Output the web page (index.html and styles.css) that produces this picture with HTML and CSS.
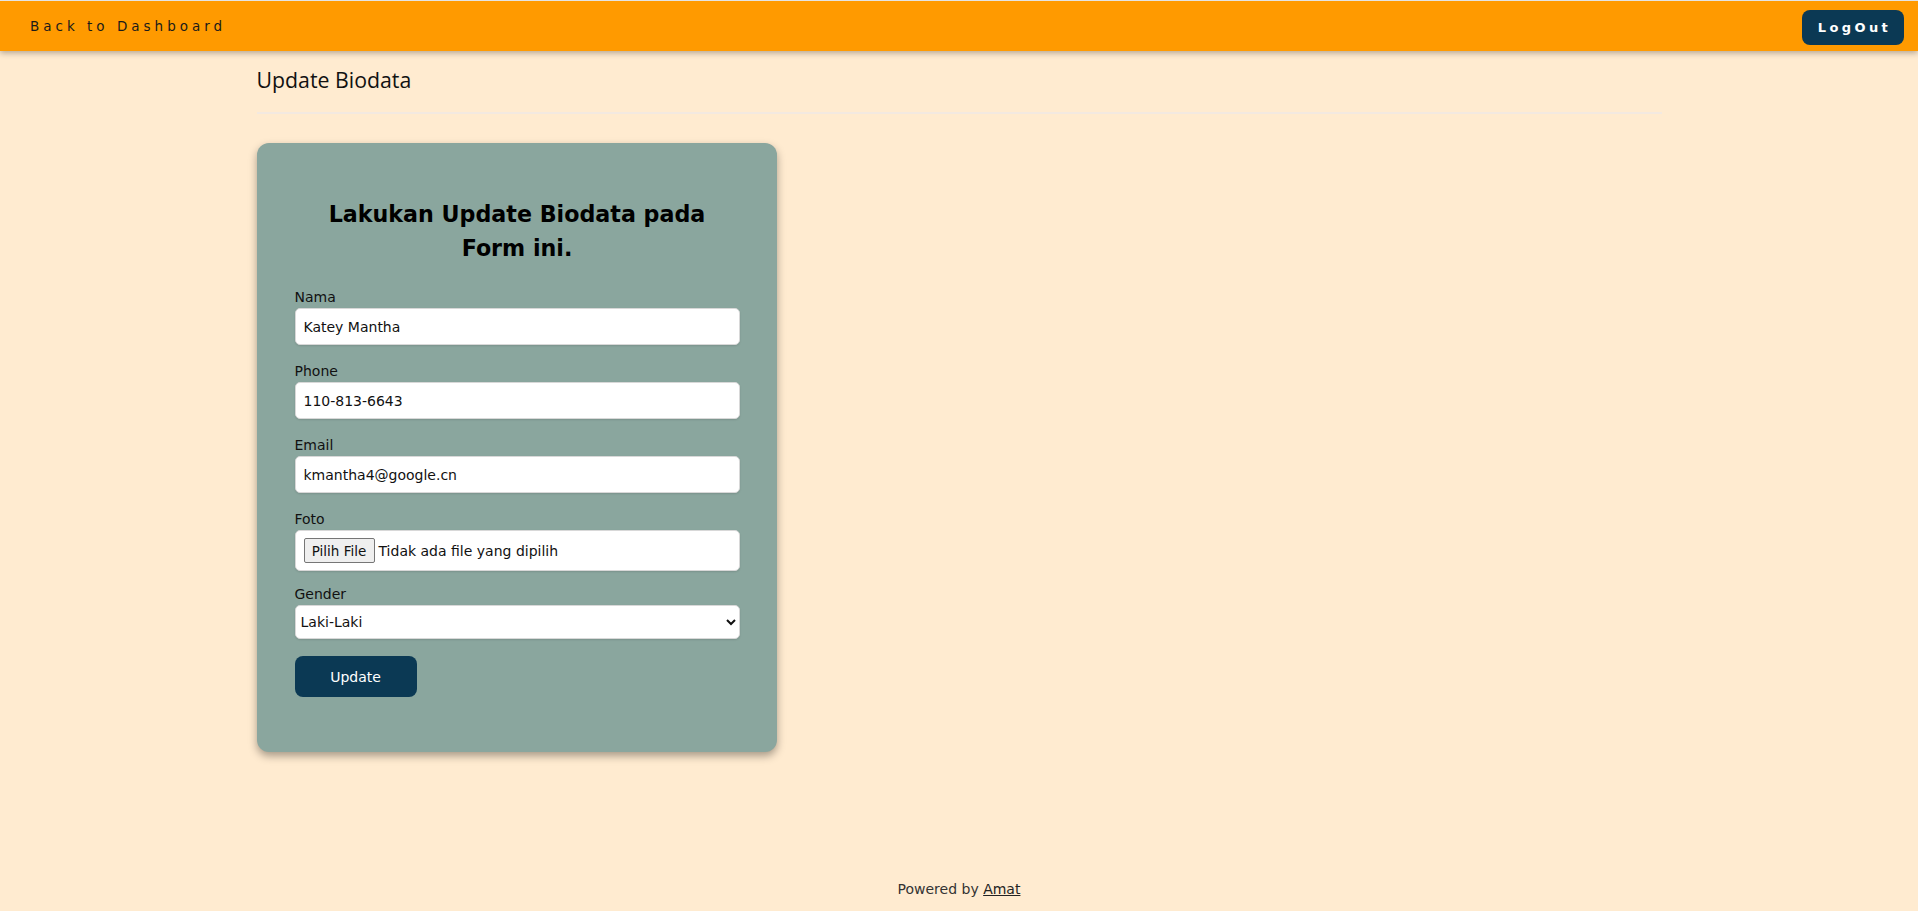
FILE: index.html
```html
<!DOCTYPE html>
<html lang="id">
<head>
<meta charset="utf-8">
<title>Update Biodata</title>
<link rel="stylesheet" href="styles.css">
</head>
<body>
<nav class="navbar">
  <a class="nav-back" href="#">Back to Dashboard</a>
  <button class="btn-logout" type="button">LogOut</button>
</nav>
<main class="container">
  <h1 class="page-title">Update Biodata</h1>
  <hr class="divider">
  <div class="card">
    <h2 class="card-title">Lakukan Update Biodata pada Form ini.</h2>
    <form class="form">
      <div class="field">
        <label class="label">Nama</label>
        <input class="input" type="text" value="Katey Mantha">
      </div>
      <div class="field">
        <label class="label">Phone</label>
        <input class="input" type="text" value="110-813-6643">
      </div>
      <div class="field">
        <label class="label">Email</label>
        <input class="input" type="text" value="kmantha4@google.cn">
      </div>
      <div class="field field-file">
        <label class="label">Foto</label>
        <div class="file-box">
          <span class="file-btn">Pilih File</span>
          <span class="file-text">Tidak ada file yang dipilih</span>
        </div>
      </div>
      <div class="field">
        <label class="label">Gender</label>
        <select class="select">
          <option>Laki-Laki</option>
          <option>Perempuan</option>
        </select>
      </div>
      <button class="btn-update" type="button">Update</button>
    </form>
  </div>
</main>
<footer class="footer">Powered by <a href="#">Amat</a></footer>
</body>
</html>
```
FILE: styles.css
```css
* { box-sizing: border-box; }
html, body { margin: 0; padding: 0; }
body {
  background: #ffebd0;
  font-family: "DejaVu Sans", Verdana, sans-serif;
  font-size: 14px;
  color: #111;
  min-height: 100vh;
  display: flex;
  flex-direction: column;
}
.navbar {
  height: 51px;
  border-top: 1px solid #e4e4e4;
  background: #ff9a00;
  box-shadow: 0 2px 6px rgba(0,0,0,0.3);
  display: flex;
  align-items: center;
  justify-content: space-between;
  padding: 0 14px 0 30px;
  position: relative;
  z-index: 1;
}
.nav-back {
  color: #1a1a1a;
  text-decoration: none;
  font-size: 13.5px;
  letter-spacing: 4px;
}
.btn-logout {
  background: #0b3954;
  color: #fff;
  border: none;
  border-radius: 8px;
  width: 102px;
  height: 35px;
  margin-top: 2px;
  font-family: "DejaVu Sans", Verdana, sans-serif;
  font-weight: bold;
  font-size: 13px;
  letter-spacing: 3.4px;
  padding: 0 0 0 3px;
}
.container {
  width: 1405px;
  margin: 0 auto;
  flex: 1;
}
.page-title {
  font-family: "Open Sans", "Noto Sans", sans-serif;
  font-weight: normal;
  font-size: 21.3px;
  line-height: 28px;
  margin: 15px 0 0 0;
  color: #111;
}
.divider {
  margin: 18px 0 0 0;
  border: none;
  border-top: 2px solid #f3e9e0;
}
.card {
  width: 520px;
  margin-top: 29px;
  background: #8aa69e;
  border-radius: 12px;
  box-shadow: 0 4px 8px rgba(0,0,0,0.35);
  padding: 38px 37px 38px 38px;
}
.card-title {
  font-size: 22.2px;
  line-height: 34px;
  font-weight: bold;
  text-align: center;
  margin: 16px 0 24px 0;
  padding: 0 18px;
  color: #000;
}
.field {
  display: flex;
  flex-direction: column;
  margin-bottom: 18px;
}
.field-file { margin-bottom: 15px; }
.label {
  font-size: 14px;
  line-height: 17px;
  margin-bottom: 2px;
  color: #111;
}
.input {
  height: 37px;
  border: 1px solid #d8d8d8;
  border-radius: 5px;
  box-shadow: 0 1px 2px rgba(0,0,0,0.12);
  padding: 0 8px;
  font-family: "DejaVu Sans", Verdana, sans-serif;
  font-size: 14px;
  color: #111;
  background: #fff;
  outline: none;
}
.file-box {
  height: 41px;
  border: 1px solid #d8d8d8;
  border-radius: 5px;
  box-shadow: 0 1px 2px rgba(0,0,0,0.12);
  background: #fff;
  display: flex;
  align-items: center;
  padding: 0 8px;
  gap: 4px;
}
.file-btn {
  height: 25px;
  width: 71px;
  background: #efefef;
  border: 1px solid #767676;
  border-radius: 2px;
  display: flex;
  align-items: center;
  justify-content: center;
  font-size: 13.5px;
  color: #111;
}
.file-text {
  font-size: 14px;
  color: #111;
}
.select {
  height: 34px;
  border: 1px solid #d8d8d8;
  border-radius: 5px;
  box-shadow: 0 1px 2px rgba(0,0,0,0.12);
  background: #fff;
  font-family: "DejaVu Sans", Verdana, sans-serif;
  font-size: 14px;
  color: #111;
  padding: 0 0 0 1px;
}
.btn-update {
  margin-top: -1px;
  margin-bottom: 17px;
  width: 122px;
  height: 41px;
  background: #0b3954;
  color: #fff;
  border: none;
  border-radius: 8px;
  font-family: "DejaVu Sans", Verdana, sans-serif;
  font-size: 14px;
  display: block;
}
.footer {
  text-align: center;
  font-size: 14px;
  line-height: 17px;
  padding: 13px 0;
  color: #333;
}
.footer a { color: #222; }
```
